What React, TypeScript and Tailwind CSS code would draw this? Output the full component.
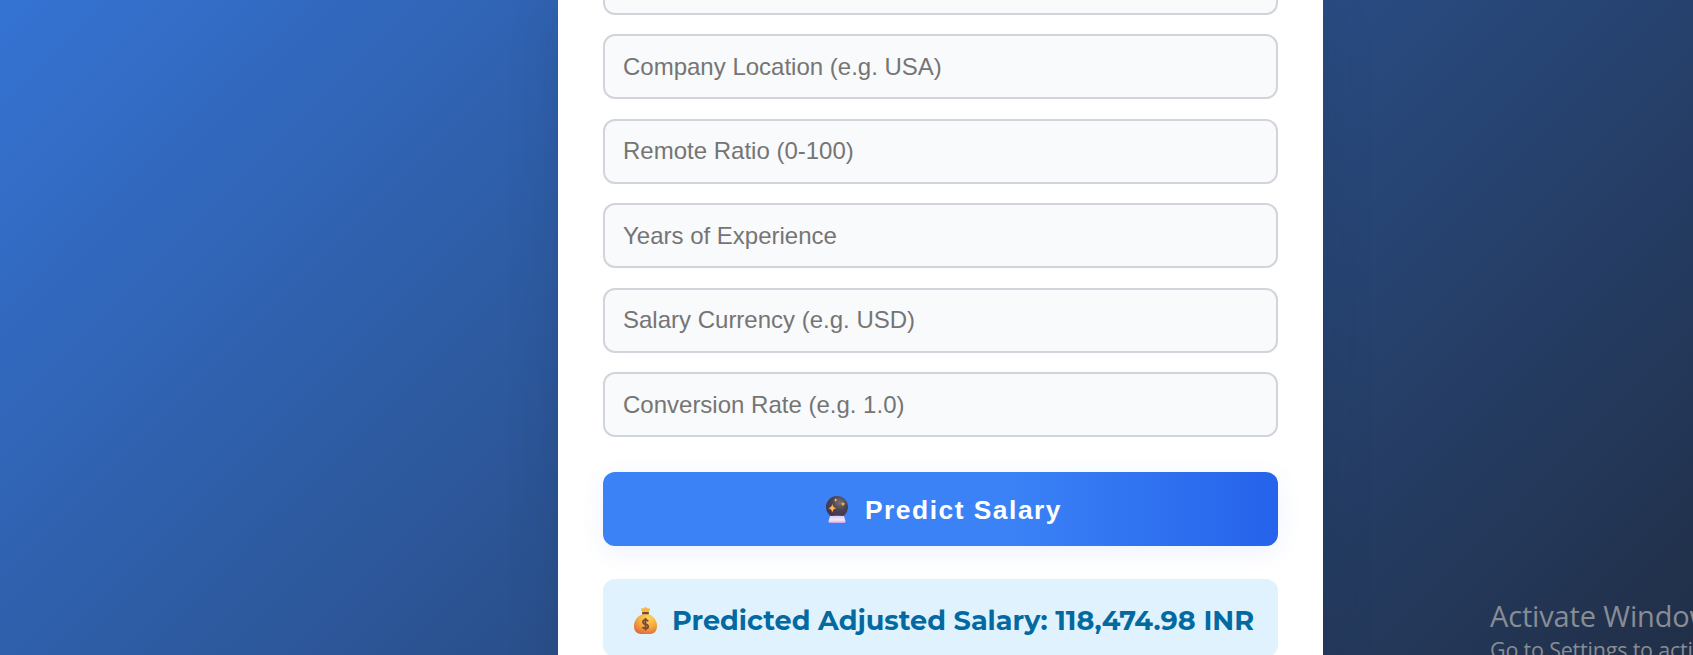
const fields = [
  'Company Location (e.g. USA)',
  'Remote Ratio (0-100)',
  'Years of Experience',
  'Salary Currency (e.g. USD)',
  'Conversion Rate (e.g. 1.0)',
];

const star = 'M0-5C.8-1.8 1.8-.8 5 0C1.8.8.8 1.8 0 5C-.8 1.8-1.8.8-5 0C-1.8-.8-.8-1.8 0-5Z';

function CrystalBall() {
  return (
    <svg viewBox="0 0 22 27" className="h-[27px] w-[22px] shrink-0" aria-hidden="true">
      <defs>
        <radialGradient id="ball" cx=".62" cy=".3" r=".75">
          <stop offset="0" stopColor="#777078" />
          <stop offset=".45" stopColor="#4b4453" />
          <stop offset="1" stopColor="#43304f" />
        </radialGradient>
        <linearGradient id="stand" x2="0" y2="1">
          <stop offset="0" stopColor="#d9cce8" />
          <stop offset=".6" stopColor="#f3e9fa" />
          <stop offset="1" stopColor="#c7a1e4" />
        </linearGradient>
      </defs>
      <circle cx="11" cy="11" r="11" fill="url(#ball)" />
      <path d="M4 20Q11 19.3 18 20L19.5 25.5Q19.5 27 18 27H4Q2.5 27 2.5 25.5Z" fill="url(#stand)" />
      <g fill="#ffb54d">
        <path d={star} transform="translate(6.3 12.3) scale(.84)" />
        <path d={star} transform="translate(17 8) scale(.48)" />
        <path d={star} transform="translate(9.7 4) scale(.4)" />
      </g>
    </svg>
  );
}

function MoneyBag() {
  return (
    <svg viewBox="0 0 23 27" className="h-[27px] w-[23px] shrink-0" aria-hidden="true">
      <defs>
        <radialGradient id="bag" cx=".62" cy=".2" r=".85">
          <stop offset="0" stopColor="#ffd552" />
          <stop offset=".55" stopColor="#f5a83b" />
          <stop offset="1" stopColor="#e06a3c" />
        </radialGradient>
      </defs>
      <path d="M8.5 6L7 2.2Q7 .8 9 1.4L11.5 0L14 1.4Q16.3 .8 16 2.2L14.5 6Z" fill="#f8b83d" />
      <path d="M8.5 7C3 9.5 0 14 0 19C0 24.5 3 27 8 27H15C20 27 23 24.5 23 19C23 14 20 9.5 14.5 7Z" fill="url(#bag)" />
      <rect x="8" y="5" width="7" height="2.3" rx="1" fill="#6b4b4d" />
      <path
        d="M14.2 14.2Q13.3 12.8 11.5 12.8Q9 12.8 9 14.9Q9 16.6 11.5 17.1Q14.2 17.6 14.2 19.6Q14.2 21.6 11.5 21.6Q9.4 21.6 8.6 20.1M11.5 11V23.4"
        fill="none"
        stroke="#78483f"
        strokeWidth="1.8"
      />
    </svg>
  );
}

export default function App() {
  return (
    <div className="relative flex h-[655px] w-full overflow-hidden bg-[linear-gradient(135deg,#3573d3_0%,#2a508c_50%,#212f47_100%)] pl-[558px] font-['Liberation_Sans',sans-serif]">
      <main className="h-[800px] w-[765px] shrink-0 bg-white px-[45px] shadow-[0_12px_48px_rgba(30,41,59,0.15)]">
        <form>
          <div className="h-[15px] rounded-b-[12px] border-2 border-t-0 border-[#d1d5db] bg-[#f9fafb]" />
          <div className="mt-[19px] flex flex-col gap-[19.5px]">
            {fields.map((label) => (
              <input
                key={label}
                placeholder={label}
                className="h-[65px] w-full rounded-[12px] border-2 border-[#d1d5db] bg-[#f9fafb] px-[18px] text-[24px] placeholder:text-[#757575]"
              />
            ))}
          </div>
          <button
            type="button"
            className="mt-[35px] flex h-[74px] w-full items-center justify-center rounded-[12px] bg-[linear-gradient(90deg,#3b82f6_60%,#2563eb)] pl-[7px] pt-px text-[26.4px] font-bold tracking-[1.5px] text-white shadow-[0_6px_24px_rgba(37,99,235,0.09)]"
          >
            <CrystalBall />
            <span className="ml-[17px] pt-[2px]">Predict Salary</span>
          </button>
        </form>
        <div className="mt-[33px] flex h-[78px] items-center rounded-[12px] bg-[#e0f2fe] pl-[31px] pt-[5px] font-['Montserrat','Inter',sans-serif] text-[27.1px] font-bold text-[#0369a1]">
          <MoneyBag />
          <span className="ml-[15px] whitespace-nowrap pt-[2px]">Predicted Adjusted Salary: 118,474.98 INR</span>
        </div>
      </main>
      <aside className="absolute left-[1490px] top-[597px] whitespace-nowrap font-['Open_Sans',sans-serif] text-[#888d95]">
        <p className="text-[29px] leading-[37px] tracking-[-0.15px]">Activate Windows</p>
        <p className="text-[21.5px] leading-[32px] tracking-[-0.2px]">Go to Settings to activate Windows.</p>
      </aside>
    </div>
  );
}
